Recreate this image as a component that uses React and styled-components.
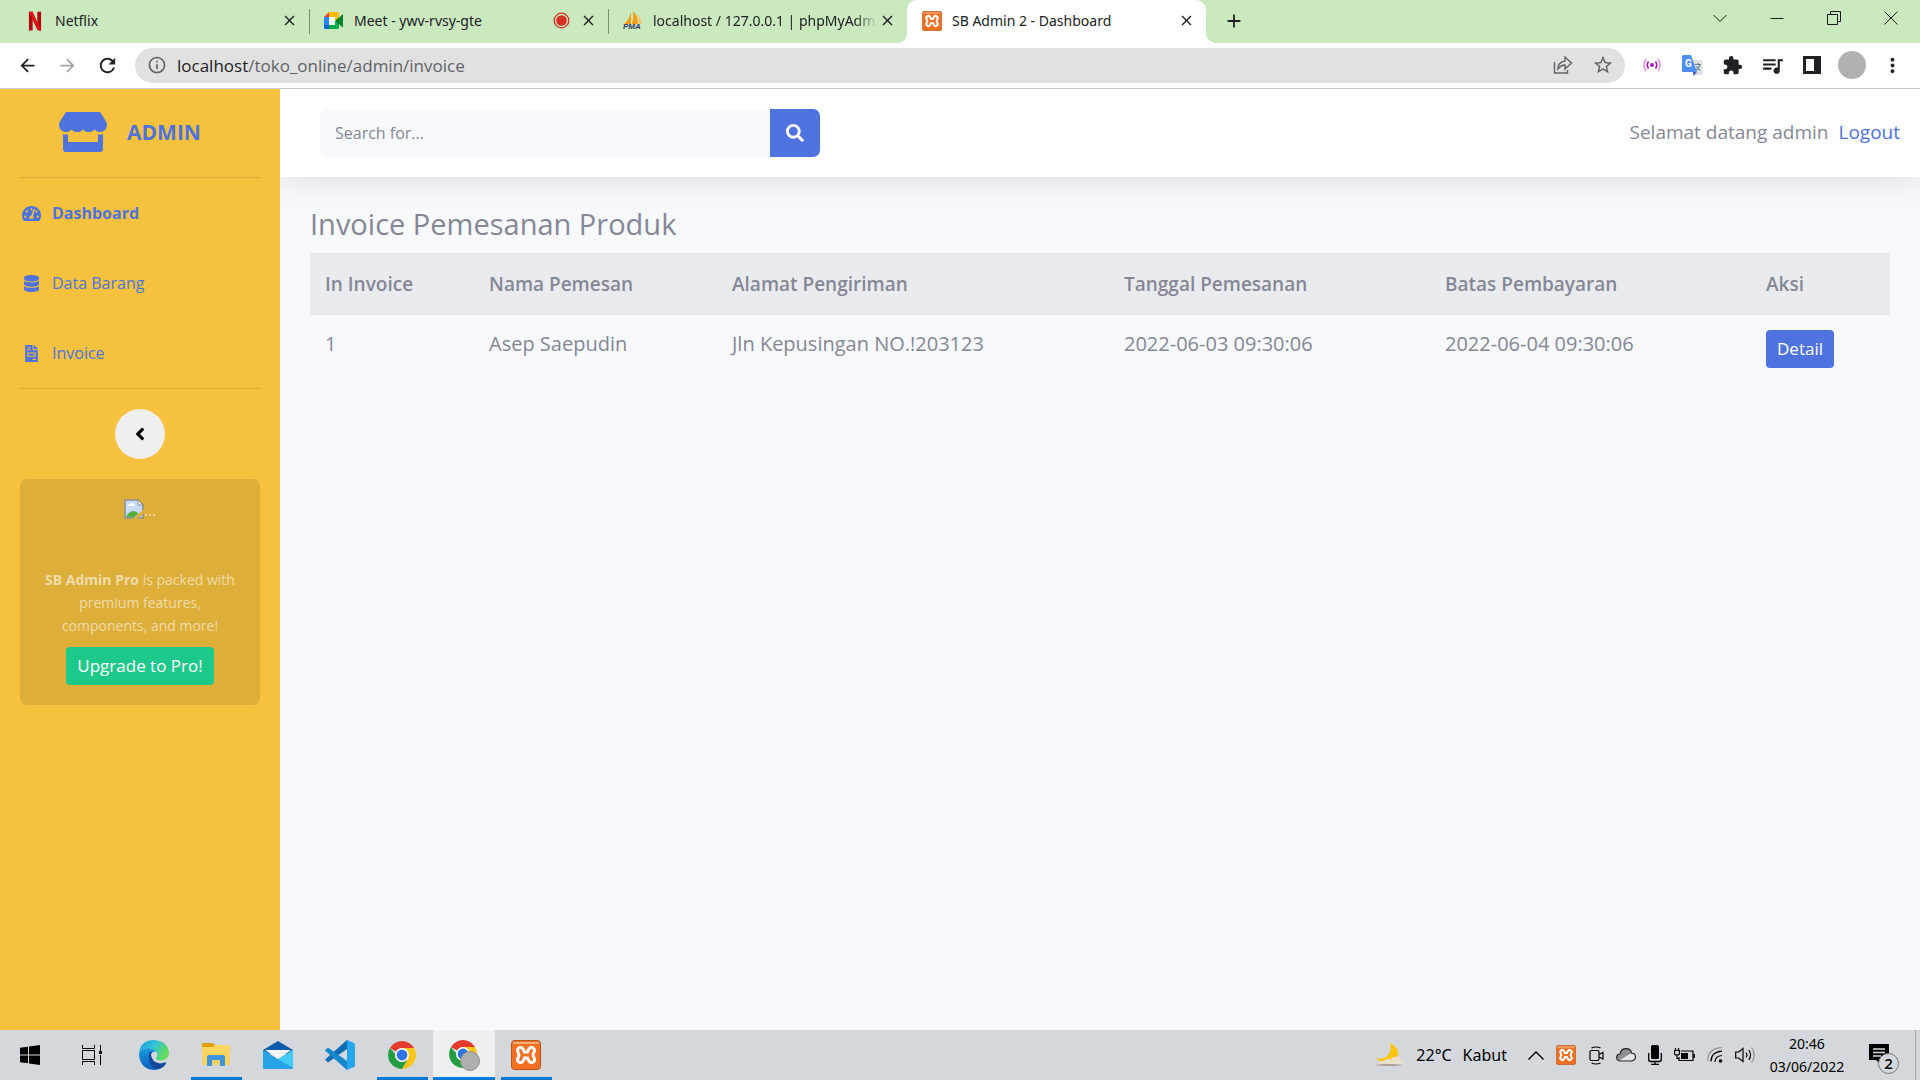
import React from "react";
import styled, { createGlobalStyle, css } from "styled-components";
import {
  FaStore, FaTachometerAlt, FaDatabase, FaFileInvoice, FaAngleLeft, FaSearch,
} from "react-icons/fa";
import {
  MdArrowBack, MdArrowForward, MdRefresh, MdInfoOutline, MdStarOutline,
  MdExtension, MdQueueMusic, MdMoreVert, MdClose, MdAdd,
} from "react-icons/md";

const ui = `"Noto Sans", "Open Sans", sans-serif`;
const page = `"Open Sans", "Noto Sans", sans-serif`;
const blue = "#4e73df";
const gold = "#f6c23e";

const GlobalStyle = createGlobalStyle`
  *, *::before, *::after { box-sizing: border-box; }
  body { margin: 0; font-family: ${page}; color: #858796; background: #f8f9fc; }
  button, input { font: inherit; }
  button { border: 0; padding: 0; background: none; color: inherit; cursor: pointer; }
  svg { display: block; flex: none; }
`;

const Screen = styled.div`
  display: flex;
  flex-direction: column;
  min-height: 100vh;
`;

/* ---------- browser chrome ---------- */

const TabStrip = styled.div`
  display: flex;
  height: 43px;
  padding-left: 10px;
  background: #cbe9be;
  color: #202124;
  font: 14px ${ui};
`;

const Tab = styled.div`
  position: relative;
  display: flex;
  align-items: center;
  gap: 10px;
  flex: 0 1 299px;
  min-width: 0;
  height: 43px;
  padding: 0 12px 2px 15px;
  ${(p) => p.$line && css`
    &::after {
      content: "";
      position: absolute;
      right: -1px;
      top: 9px;
      width: 1px;
      height: 25px;
      background: #7c8f75;
    }
  `}
  ${(p) => p.$active && css`
    background: #fff;
    border-radius: 10px 10px 0 0;
    &::before, &::after {
      content: "";
      position: absolute;
      bottom: 0;
      width: 10px;
      height: 10px;
    }
    &::before { left: -10px; background: radial-gradient(circle at 0 0, transparent 10px, #fff 10px); }
    &::after { right: -10px; background: radial-gradient(circle at 100% 0, transparent 10px, #fff 10px); }
  `}
`;

const Favicon = styled.span`
  display: grid;
  place-items: center;
  flex: none;
  width: 20px;
`;

const TabTitle = styled.span`
  flex: 1;
  min-width: 0;
  overflow: hidden;
  white-space: nowrap;
  ${(p) => p.$fade && css`
    margin-right: -8px;
    mask-image: linear-gradient(90deg, #000 90%, transparent);
  `}
`;

const IconButton = styled.button`
  display: grid;
  place-items: center;
  width: ${(p) => p.$w || 40}px;
  height: ${(p) => p.$h || 36}px;
  color: ${(p) => p.$color || "#202124"};
`;

const NewTab = styled(IconButton)`
  margin: 3px 0 0 8px;
`;

const WindowButtons = styled.div`
  display: flex;
  margin-left: auto;
  padding-right: 1px;
`;

const Toolbar = styled.div`
  display: flex;
  align-items: center;
  height: 46px;
  padding: 0 8px 1px 7px;
  background: #fff;
  border-bottom: 1px solid #c9cacc;
`;

const Omnibox = styled.div`
  display: flex;
  align-items: center;
  flex: 1;
  height: 35px;
  margin: 0 7px 0 8px;
  padding: 0 2px 0 12px;
  border-radius: 18px;
  background: #e1e1e1;
  color: #5f6368;
`;

const Url = styled.span`
  flex: 1;
  margin-left: 10px;
  font: 17px ${page};
  color: #5f6368;
  b { font-weight: 400; color: #202124; }
`;

const Avatar = styled.span`
  width: 28px;
  height: 28px;
  border-radius: 50%;
  background: #b1b1b1;
`;

/* ---------- admin page ---------- */

const Body = styled.div`
  display: flex;
  flex: 1;
`;

const Sidebar = styled.aside`
  display: flex;
  flex-direction: column;
  align-items: center;
  flex: none;
  width: 280px;
  padding: 0 20px;
  background: ${gold};
  color: ${blue};
`;

const Brand = styled.a`
  display: flex;
  align-items: center;
  height: 88px;
  padding-bottom: 3px;
  color: ${blue};
  font-size: 21px;
  font-weight: 700;
  text-decoration: none;
  svg { width: 48px; height: 40px; }
  span { margin: 0 20px; }
`;

const Divider = styled.hr`
  width: 100%;
  margin: 0;
  border: 0;
  border-top: 1px solid #dcae38;
`;

const Nav = styled.nav`
  width: 100%;
`;

const NavItem = styled.a`
  display: flex;
  align-items: center;
  gap: 10px;
  height: 70px;
  color: ${blue};
  font-size: 16px;
  font-weight: ${(p) => (p.$active ? 700 : 400)};
  text-decoration: none;
`;

const NavIcon = styled.span`
  display: grid;
  place-items: center;
  width: 22px;
  svg { width: 19px; height: 17px; }
`;

const Toggle = styled.button`
  display: grid;
  place-items: center;
  width: 50px;
  height: 50px;
  margin: 20px 0;
  border-radius: 50%;
  background: #efefef;
  color: #000;
  font-size: 20px;
`;

const Promo = styled.section`
  display: flex;
  flex-direction: column;
  align-items: center;
  width: 100%;
  padding: 20px;
  border-radius: 7px;
  background: #ddae38;
`;

const MissingImage = styled.div`
  display: flex;
  align-items: flex-start;
  height: 69px;
  font-size: 16px;
  color: #f1deaf;
`;

const PromoText = styled.p`
  margin: 0 0 10px;
  font-size: 14px;
  line-height: 23px;
  text-align: center;
  color: #f0dcab;
`;

const Button = styled.a`
  display: inline-block;
  padding: 0 11px;
  border-radius: 4px;
  background: ${(p) => (p.$green ? "#1cc88a" : blue)};
  color: #fff;
  font-size: 17px;
  line-height: 38px;
  text-decoration: none;
`;

const Content = styled.div`
  flex: 1;
  min-width: 0;
  overflow: hidden;
`;

const Topbar = styled.header`
  display: flex;
  align-items: center;
  justify-content: space-between;
  height: 88px;
  padding: 0 20px 0 40px;
  background: #fff;
  box-shadow: 0 3px 35px rgba(58, 59, 69, 0.15);
`;

const Search = styled.form`
  display: flex;
  width: 500px;
  height: 48px;
  border-radius: 7px;
  overflow: hidden;
  background: #f8f9fc;
`;

const SearchInput = styled.input`
  flex: 1;
  min-width: 0;
  padding: 0 15px;
  border: 0;
  background: transparent;
  color: #6e707e;
  font-size: 16px;
  &::placeholder { color: #858796; }
`;

const SearchButton = styled.button`
  display: grid;
  place-items: center;
  width: 50px;
  background: ${blue};
  color: #fff;
  font-size: 18px;
`;

const Account = styled.div`
  display: flex;
  gap: 10px;
  padding-bottom: 2px;
  font-size: 19px;
  a { color: ${blue}; text-decoration: none; }
`;

const Main = styled.main`
  padding: 30px;
`;

const Title = styled.h4`
  margin: 0 0 12px;
  font-size: 29px;
  line-height: 34px;
  font-weight: 400;
`;

const Table = styled.table`
  width: 100%;
  table-layout: fixed;
  border-collapse: collapse;
  text-align: left;
  th, td { padding: 15px; vertical-align: top; }
  th {
    border: solid #e3e6f0;
    border-width: 1px 0;
    background: #eaebee;
    font-size: 19px;
    line-height: 30px;
    font-weight: 600;
  }
  td { font-size: 20px; line-height: 28px; }
`;

/* ---------- taskbar ---------- */

const Taskbar = styled.footer`
  display: flex;
  justify-content: space-between;
  height: 50px;
  background: #d4d7dc;
  color: #000;
  font: 16px ${ui};
`;

const Apps = styled.div`
  display: flex;
`;

const TaskButton = styled.button`
  display: grid;
  place-items: center;
  position: relative;
  width: ${(p) => (p.$start ? 60 : 62)}px;
  height: 50px;
  background: ${(p) => (p.$active ? "#edeff1" : "none")};
  ${(p) => p.$start && css`
    margin-right: 1px;
  `}
  ${(p) => p.$open && css`
    &::after {
      content: "";
      position: absolute;
      left: ${p.$active ? 0 : 6}px;
      right: ${p.$active ? 0 : 5}px;
      bottom: 0;
      height: 3px;
      background: #0078d7;
    }
  `}
`;

const Tray = styled.div`
  display: flex;
  align-items: center;
  gap: 12px;
  padding-right: 4px;
`;

const Weather = styled.div`
  display: flex;
  align-items: center;
  gap: 11px;
  margin-right: 9px;
`;

const Clock = styled.time`
  width: 78px;
  font-size: 14px;
  line-height: 23px;
  text-align: center;
`;

const Notice = styled.button`
  display: grid;
  place-items: center;
  width: 58px;
  height: 50px;
  padding: 8px 4px 0 0;
  border-right: 1px solid #9fa3a8;
`;

/* ---------- drawings ---------- */

const Xampp = ({ size }) => (
  <svg width={size} height={size} viewBox="0 0 30 30" fill="none" strokeLinecap="round">
    <rect x=".5" y=".5" width="29" height="29" rx="3" fill="#f37021" stroke="#b4561c" />
    <path d="M2 2h26v2H2z" fill="#f9ab79" />
    <path d="M9.500 10.500q3 4.500 0 9M20.500 10.500q-3 4.500 0 9M11 15h8" stroke="#fff" strokeWidth="9" />
    <path d="M9.500 10.500q3 4.500 0 9M20.500 10.500q-3 4.500 0 9M11 15h8" stroke="#f37021" strokeWidth="3" />
  </svg>
);

const Netflix = () => (
  <svg width="14" height="20" viewBox="0 0 15 20">
    <path d="M1 0h4v20l-4 .5zM10 0h4v20.500l-4-.5z" fill="#b1060f" />
    <path d="M1 0h4l9 20-4-.4z" fill="#e50914" />
  </svg>
);

const Meet = () => (
  <svg width="20" height="18" viewBox="0 0 20 18">
    <path d="M5 0h8.500q1.500 0 1.500 1.500V8h-4V5H5z" fill="#ffba00" />
    <path d="M0 5l5-5v5z" fill="#ea4335" />
    <path d="M0 5h5v8H0z" fill="#2684fc" />
    <path d="M0 13h5v4H1.500Q0 17 0 15.500z" fill="#0066da" />
    <path d="M5 13h6V9h4v6.500q0 1.500-1.500 1.500H5z" fill="#00ac47" />
    <path d="M11 9l7.500-6.500Q19 2 19 3v11.500q0 1-.7.500L11 9z" fill="#00832d" />
    <path d="M5 5h6v8H5z" fill="#fff" />
  </svg>
);

const Recording = () => (
  <svg width="17" height="17" viewBox="0 0 17 17">
    <circle cx="8.500" cy="8.500" r="7.300" fill="none" stroke="#d93025" strokeWidth="1.300" />
    <circle cx="8.500" cy="8.500" r="5.300" fill="#d93025" />
  </svg>
);

const PhpMyAdmin = () => (
  <svg width="20" height="20" viewBox="0 0 20 20">
    <path d="M8 1v12H1Q6 9 8 1z" fill="#f89c0e" />
    <path d="M10 0q5 5 5 13H9q2-6 1-13z" fill="#f89c0e" />
    <path d="M14 3q4 4 5 9l-3 1q0-6-2-10z" fill="#fbc06a" />
    <text x="0" y="18" fontFamily="Liberation Sans, sans-serif" fontSize="8" fontWeight="700" fontStyle="italic" fill="#33346b">PMA</text>
  </svg>
);

const Share = () => (
  <svg width="20" height="20" viewBox="0 0 20 20" fill="none" stroke="#5f6368" strokeWidth="1.400">
    <path d="M1.500 7v11h13v-3" />
    <path d="M5 14q0-7 7-8V2l6.500 6-6.500 6v-4q-4 0-7 4z" />
  </svg>
);

const Signal = () => (
  <svg width="18" height="14" viewBox="0 0 18 14" fill="none" strokeWidth="1.700">
    <circle cx="9" cy="7" r="2" fill="#a31db5" />
    <path d="M5.500 3.500q-2.500 3.500 0 7M12.500 3.500q2.500 3.500 0 7" stroke="#a31db5" />
    <path d="M3 1q-4 6 0 12M15 1q4 6 0 12" stroke="#dc9be4" />
  </svg>
);

const Translate = () => (
  <svg width="21" height="21" viewBox="0 0 21 21">
    <path d="M9 5h10q1.500 0 1.500 1.500v12q0 1.500-1.500 1.500h-6z" fill="#dfe1e5" />
    <path d="M11 17h4l-3.500 4z" fill="#3b5fc4" />
    <path d="M1.500 0H9l6 17H1.500Q0 17 0 15.500v-14Q0 0 1.500 0z" fill="#4f8df6" />
    <path d="M13 9.500h6M16 8v1.500M18 9.500q-1 4-4 6M14.500 11.500q1.500 3 4 4" stroke="#6b8a96" strokeWidth="1.200" fill="none" />
    <text x="3" y="12" fontFamily="Roboto, sans-serif" fontSize="10" fontWeight="700" fill="#fff">G</text>
  </svg>
);

const SidePanel = () => (
  <svg width="18" height="18" viewBox="0 0 18 18">
    <path d="M0 0h18v18H0zM3 3v12h8V3z" fill="#202124" fillRule="evenodd" />
  </svg>
);

const WinGlyph = ({ d }) => (
  <svg width="14" height="14" viewBox="0 0 14 14" fill="none" stroke="#1b1b1b" strokeWidth="1">
    <path d={d} />
  </svg>
);

const BrokenImage = () => (
  <svg width="20" height="20" viewBox="0 0 20 20">
    <path d="M1 1h13l5 5v13H1z" fill="#c6dbf7" stroke="#8d8f93" strokeWidth="1.500" />
    <path d="M14 1v5h5z" fill="#fff" stroke="#8d8f93" />
    <path d="M3 7q1-2 3-2 2-2 3 0 2 0 2 2z" fill="#fff" />
    <path d="M2 18q3-6 7-6t5 3l-4 3.500z" fill="#56ad3b" />
    <path d="M9 20l11-10v4l-6.500 6z" fill="#ddae38" />
  </svg>
);

const Windows = () => (
  <svg width="20" height="20" viewBox="0 0 20 20">
    <path d="M0 2.800l8-1.100v7.800H0zM9 1.500L20 0v9.500H9zM0 10.500h8v7.800l-8-1.100zM9 10.500h11V20L9 18.500z" fill="#000" />
  </svg>
);

const TaskView = () => (
  <svg width="20" height="20" viewBox="0 0 20 20" fill="none" stroke="#000">
    <path d="M.5 0v3.500h12V0M.5 5.500h12v9H.5zM.5 20v-3.500h12V20M18.500 0v6M18.500 10v10" />
    <path d="M17 6h3v3h-3z" fill="#000" stroke="none" />
  </svg>
);

const Edge = () => (
  <svg width="30" height="30" viewBox="0 0 30 30">
    <defs>
      <linearGradient id="edgeTop" x1="0" y1="0" x2="1" y2=".4">
        <stop offset="0" stopColor="#1a9de0" />
        <stop offset=".55" stopColor="#35c3d3" />
        <stop offset="1" stopColor="#62db58" />
      </linearGradient>
      <linearGradient id="edgeLeft" x1="0" y1="0" x2="0" y2="1">
        <stop offset="0" stopColor="#1b9ce2" />
        <stop offset="1" stopColor="#0c5ebd" />
      </linearGradient>
    </defs>
    <path d="M0 14Q1 0 15 0q14 1 15 13-.5 7-8 7.500-5 0-5-2 2-2 1-5-2-5-9-5.500Q3 8 0 14z" fill="url(#edgeTop)" />
    <path d="M0 14q2-5.500 9-6 6 .5 8 4-5-1-5.500 4 0 8 8 10 4 .5 8-3Q23 30 15 30 1 29 0 14z" fill="url(#edgeLeft)" />
    <path d="M10 13q-2 15 10 16 5-2 7.500-6.500-1.500-.5-6.500 1-8-1-9-8.500-.3-2 2-3.500-3-.5-4 1.500z" fill="#114a9b" />
  </svg>
);

const Folder = () => (
  <svg width="28" height="24" viewBox="0 0 28 24">
    <path d="M0 1q0-1 1-1h10l3 3-2 3H0z" fill="#e2a007" />
    <path d="M0 4h11l3-2h13q1 0 1 1v19H0z" fill="#ffd561" />
    <path d="M5 23V14q0-2 2-2h14q2 0 2 2v9h-5v-6h-8v6z" fill="#3f92db" />
  </svg>
);

const Mail = () => (
  <svg width="30" height="28" viewBox="0 0 30 28">
    <path d="M0 9L15 0l15 9v4H0z" fill="#0d5cab" />
    <path d="M0 9l15 9L30 9v18q0 1-1 1H1q-1 0-1-1z" fill="#27a4e8" />
    <path d="M30 9v18L15 18z" fill="#45c9f5" />
    <path d="M2 9h26L15 18z" fill="#f4f4f4" />
  </svg>
);

const VsCode = () => (
  <svg width="30" height="30" viewBox="0 0 30 30">
    <path d="M22 0L0 19.500l3 3L22 9z" fill="#0c6fb5" />
    <path d="M22 30L0 10.500l3-3L22 21z" fill="#1687cc" />
    <path d="M22 0l7 3q1 .5 1 1.500v21q0 1-1 1.500l-7 3z" fill="#26a5f0" />
  </svg>
);

const ChromeParts = () => (
  <>
    <path d="M14 14L1.900 7A14 14 0 0 1 26.100 7z" fill="#e33b2e" />
    <path d="M14 14h-6L1.900 7A14 14 0 0 0 14 28l6-10z" fill="#259b44" />
    <path d="M14 7h12.100A14 14 0 0 1 14 28l6-10z" fill="#fdc411" />
    <circle cx="14" cy="14" r="7" fill="#fff" />
    <circle cx="14" cy="14" r="5.400" fill="#2f74e8" />
  </>
);

const Chrome = () => (
  <svg width="28" height="28" viewBox="0 0 28 28"><ChromeParts /></svg>
);

const ChromeProfile = () => (
  <svg width="31" height="31" viewBox="0 0 31 31">
    <ChromeParts />
    <circle cx="21" cy="21" r="9.500" fill="#afafaf" stroke="#8f8f8f" />
  </svg>
);

const Moon = () => (
  <svg width="30" height="24" viewBox="0 0 30 24">
    <path d="M15 0q9 4 8 12-3 9-13 8-6-1-9-5 8 2 12-3 4-5 2-12z" fill="#fbc40f" />
    <path d="M4 21q0-4 5-3 3-4 7-1 1-4 6-3 4 0 3 3 4 1 3 3-6 2-24 1z" fill="#eadfcb" />
    <path d="M0 22q14-2 28 0-14 2-28 0z" fill="#a89a90" />
  </svg>
);

const TrayUp = () => (
  <svg width="16" height="9" viewBox="0 0 16 9" fill="none" stroke="#000" strokeWidth="1.300">
    <path d="M.5 8.500L8 1l7.500 7.500" />
  </svg>
);

const Camera = () => (
  <svg width="16" height="19" viewBox="0 0 16 19" fill="none" stroke="#000" strokeWidth="1.200">
    <rect x="2" y="4.500" width="9" height="10" rx="1.500" />
    <path d="M11 8.500l4-2v6.500l-4-2M3.500 2Q8 0 12.500 2M3.500 17q4.500 2 9 0" />
  </svg>
);

const Cloud = () => (
  <svg width="20" height="14" viewBox="0 0 20 14">
    <path d="M5 13Q.7 13 .7 9.500T4 6Q5 .7 10 .7T15.500 5q4 .5 4 4t-4 4z" fill="#e4e5e7" />
    <path d="M4 6Q5 .7 10 .7T15.500 5L4 12Q.7 12 .7 9T4 6z" fill="#8d8f92" />
    <path d="M5 13Q.7 13 .7 9.500T4 6Q5 .7 10 .7T15.500 5q4 .5 4 4t-4 4z" fill="none" stroke="#222" strokeWidth="1.200" />
  </svg>
);

const Mic = () => (
  <svg width="14" height="20" viewBox="0 0 14 20" fill="none" stroke="#000" strokeWidth="1.300">
    <rect x="3" y="0" width="8" height="14" rx="1.500" fill="#000" stroke="none" />
    <path d="M.7 8v6.500q0 2 2 2h8.600q2 0 2-2V8M7 16.500V20M3 19.300h8" />
  </svg>
);

const Battery = () => (
  <svg width="21" height="14" viewBox="0 0 21 14" fill="none" stroke="#000" strokeWidth="1.200">
    <path d="M7 3h12v9.500H5V9M20.300 6v4M1.500 0v2.500M4.500 0v2.500M.5 2.500h5v3q0 1.500-2.500 1.500T.5 5.500zM3 7v3.500h2" />
    <path d="M7 5h7v6H7z" fill="#000" stroke="none" />
  </svg>
);

const Wifi = () => (
  <svg width="16" height="16" viewBox="0 0 16 16" fill="none" stroke="#000" strokeWidth="1.200">
    <path d="M.6 14Q1 1 15 .6" stroke="#8d9196" />
    <path d="M4 14.500Q4 5 15 4.200M8 15q0-6 7-6.500" />
    <circle cx="13.500" cy="14" r="1.800" fill="#000" stroke="none" />
  </svg>
);

const Volume = () => (
  <svg width="21" height="18" viewBox="0 0 21 18" fill="none" stroke="#000" strokeWidth="1.200">
    <path d="M.7 6h3L8 2.500v13L3.700 12h-3zM11 6.500q2 2.500 0 5M13.800 4q3.500 5 0 10" />
    <path d="M16.500 1.500q5.500 7.500 0 15" stroke="#8d9196" />
  </svg>
);

const ActionCenter = () => (
  <svg width="31" height="31" viewBox="0 0 31 31">
    <path d="M0 0h20v16h-9v4l-4-4H0z" fill="#000" />
    <path d="M4 5h12M4 8.500h12M4 12h8" stroke="#d4d7dc" strokeWidth="1.300" />
    <circle cx="19.500" cy="19.500" r="10" fill="#d4d7dc" stroke="#74777b" />
    <text x="19.500" y="25" textAnchor="middle" fontFamily="Open Sans, sans-serif" fontSize="15" fontWeight="600" fill="#000">2</text>
  </svg>
);

/* ---------- data ---------- */

const tabs = [
  { title: "Netflix", icon: <Netflix />, line: true },
  { title: "Meet - ywv-rvsy-gte", icon: <Meet />, rec: true, line: true },
  { title: "localhost / 127.0.0.1 | phpMyAdm", icon: <PhpMyAdmin />, fade: true },
  { title: "SB Admin 2 - Dashboard", icon: <Xampp size={20} />, active: true },
];

const links = [
  { label: "Dashboard", icon: <FaTachometerAlt />, active: true },
  { label: "Data Barang", icon: <FaDatabase /> },
  { label: "Invoice", icon: <FaFileInvoice /> },
];

const columns = [
  ["In Invoice", 164],
  ["Nama Pemesan", 243],
  ["Alamat Pengiriman", 392],
  ["Tanggal Pemesanan", 321],
  ["Batas Pembayaran", 321],
  ["Aksi"],
];

const rows = [
  ["1", "Asep Saepudin", "Jln Kepusingan NO.!203123", "2022-06-03 09:30:06", "2022-06-04 09:30:06"],
];

const apps = [
  { name: "Start", icon: <Windows />, start: true },
  { name: "Task View", icon: <TaskView /> },
  { name: "Edge", icon: <Edge /> },
  { name: "File Explorer", icon: <Folder />, open: true },
  { name: "Mail", icon: <Mail /> },
  { name: "Code", icon: <VsCode /> },
  { name: "Chrome", icon: <Chrome />, open: true },
  { name: "Chrome profile", icon: <ChromeProfile />, open: true, active: true },
  { name: "XAMPP", icon: <Xampp size={30} />, open: true },
];

export default function App() {
  return (
    <Screen>
      <GlobalStyle />
      <TabStrip>
        {tabs.map((t) => (
          <Tab key={t.title} $active={t.active} $line={t.line}>
            <Favicon>{t.icon}</Favicon>
            <TabTitle $fade={t.fade}>{t.title}</TabTitle>
            {t.rec && <Recording />}
            <IconButton $w={16} aria-label="Close tab"><MdClose size={17} /></IconButton>
          </Tab>
        ))}
        <NewTab aria-label="New tab"><MdAdd size={22} /></NewTab>
        <WindowButtons>
          <IconButton $w={57} aria-label="Search tabs"><WinGlyph d="M.5 4L7 10.500 13.500 4" /></IconButton>
          <IconButton $w={57} aria-label="Minimize"><WinGlyph d="M.5 7.500h13" /></IconButton>
          <IconButton $w={57} aria-label="Restore"><WinGlyph d="M.5 3.500h10v10H.5zM3.500 3V.5h10v10h-3" /></IconButton>
          <IconButton $w={57} aria-label="Close"><WinGlyph d="M.5 .5l13 13M13.500 .5l-13 13" /></IconButton>
        </WindowButtons>
      </TabStrip>
      <Toolbar>
        <IconButton aria-label="Back"><MdArrowBack size={21} /></IconButton>
        <IconButton $color="#a3a5a8" aria-label="Forward"><MdArrowForward size={21} /></IconButton>
        <IconButton aria-label="Reload"><MdRefresh size={23} /></IconButton>
        <Omnibox>
          <MdInfoOutline size={20} />
          <Url><b>localhost</b>/toko_online/admin/invoice</Url>
          <IconButton aria-label="Share"><Share /></IconButton>
          <IconButton $color="#5f6368" aria-label="Bookmark"><MdStarOutline size={22} /></IconButton>
        </Omnibox>
        <IconButton aria-label="Signal"><Signal /></IconButton>
        <IconButton aria-label="Translate"><Translate /></IconButton>
        <IconButton aria-label="Extensions"><MdExtension size={21} /></IconButton>
        <IconButton aria-label="Media"><MdQueueMusic size={25} /></IconButton>
        <IconButton aria-label="Side panel"><SidePanel /></IconButton>
        <IconButton aria-label="Profile"><Avatar /></IconButton>
        <IconButton aria-label="Menu"><MdMoreVert size={23} /></IconButton>
      </Toolbar>

      <Body>
        <Sidebar>
          <Brand href="#"><FaStore /><span>ADMIN</span></Brand>
          <Divider />
          <Nav>
            {links.map((l) => (
              <NavItem key={l.label} href="#" $active={l.active}>
                <NavIcon>{l.icon}</NavIcon>
                {l.label}
              </NavItem>
            ))}
          </Nav>
          <Divider />
          <Toggle aria-label="Collapse sidebar"><FaAngleLeft /></Toggle>
          <Promo>
            <MissingImage><BrokenImage />...</MissingImage>
            <PromoText>
              <b>SB Admin Pro</b> is packed with premium features, components, and more!
            </PromoText>
            <Button href="#" $green>Upgrade to Pro!</Button>
          </Promo>
        </Sidebar>
        <Content>
          <Topbar>
            <Search onSubmit={(e) => e.preventDefault()}>
              <SearchInput type="text" placeholder="Search for..." aria-label="Search for" />
              <SearchButton aria-label="Search"><FaSearch /></SearchButton>
            </Search>
            <Account>
              <span>Selamat datang admin</span>
              <a href="#">Logout</a>
            </Account>
          </Topbar>
          <Main>
            <Title>Invoice Pemesanan Produk</Title>
            <Table>
              <colgroup>
                {columns.map(([name, w]) => <col key={name} width={w} />)}
              </colgroup>
              <thead>
                <tr>{columns.map(([name]) => <th key={name} scope="col">{name}</th>)}</tr>
              </thead>
              <tbody>
                {rows.map((r) => (
                  <tr key={r[0]}>
                    {r.map((c) => <td key={c}>{c}</td>)}
                    <td><Button href="#">Detail</Button></td>
                  </tr>
                ))}
              </tbody>
            </Table>
          </Main>
        </Content>
      </Body>

      <Taskbar>
        <Apps>
          {apps.map((a) => (
            <TaskButton key={a.name} aria-label={a.name} $start={a.start} $open={a.open} $active={a.active}>
              {a.icon}
            </TaskButton>
          ))}
        </Apps>
        <Tray>
          <Weather><Moon /><span>22°C</span><span>Kabut</span></Weather>
          <TrayUp />
          <Xampp size={20} />
          <Camera />
          <Cloud />
          <Mic />
          <Battery />
          <Wifi />
          <Volume />
          <Clock>20:46<br />03/06/2022</Clock>
          <Notice aria-label="Notifications"><ActionCenter /></Notice>
        </Tray>
      </Taskbar>
    </Screen>
  );
}
